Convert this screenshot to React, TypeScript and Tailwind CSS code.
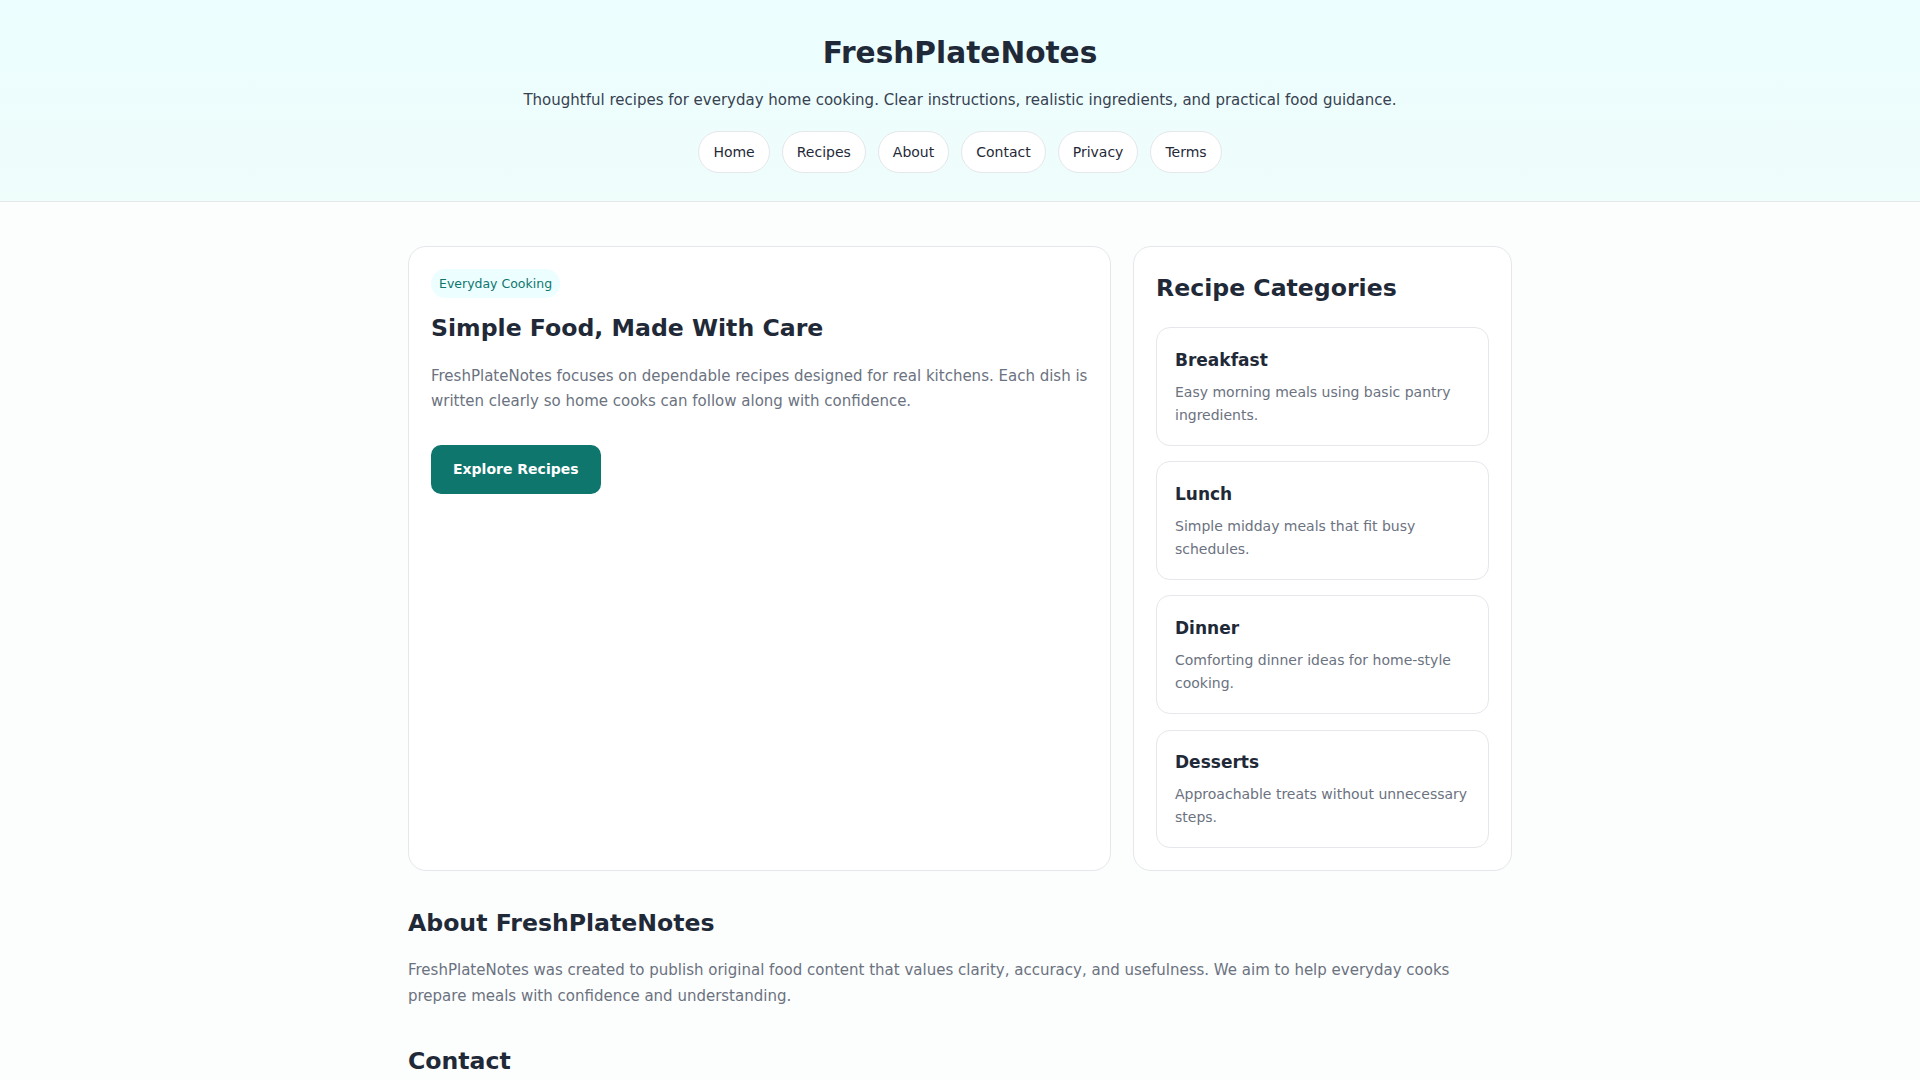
const navLinks = ["Home", "Recipes", "About", "Contact", "Privacy", "Terms"];

const categories = [
  { title: "Breakfast", text: "Easy morning meals using basic pantry ingredients." },
  { title: "Lunch", text: "Simple midday meals that fit busy schedules." },
  { title: "Dinner", text: "Comforting dinner ideas for home-style cooking." },
  { title: "Desserts", text: "Approachable treats without unnecessary steps." },
];

export default function App() {
  return (
    <div className="min-h-screen bg-[#fcfdfd] font-['DejaVu_Sans',sans-serif] text-[#1f2937]">
      {/* Header */}
      <header className="bg-gradient-to-b from-[#ecfeff] to-[#effdfb] border-b border-[#e5e7eb] pt-[35px] pb-[28px] text-center">
        <h1 className="text-[29.6px] leading-[36px] font-bold text-[#1f2937]">FreshPlateNotes</h1>
        <p className="mt-[17px] text-[15px] leading-[24px] text-[#374151]">
          Thoughtful recipes for everyday home cooking. Clear instructions, realistic ingredients, and practical food guidance.
        </p>
        <nav className="mt-[19px] flex justify-center gap-3">
          {navLinks.map((l) => (
            <a
              key={l}
              href="#"
              className="h-[42px] flex items-center px-[14px] rounded-full border border-[#e5e7eb] bg-white text-sm text-[#1f2937]"
            >
              {l}
            </a>
          ))}
        </nav>
      </header>

      <main className="w-[1104px] mx-auto pt-[44px] pb-16">
        <div className="grid grid-cols-[703px_379px] gap-[22px] items-stretch">
          {/* Hero card */}
          <section className="bg-white border border-[#e5e7eb] rounded-[18px] p-[22px]">
            <span className="inline-block rounded-full bg-[#ecfeff] text-[#0f766e] text-[12.5px] leading-[17px] px-2 py-1.5">
              Everyday Cooking
            </span>
            <h2 className="mt-[11px] text-[23.6px] leading-[38px] font-bold text-[#1f2937]">Simple Food, Made With Care</h2>
            <p className="mt-[17px] text-[15px] leading-[1.65] text-[#6b7280]">
              FreshPlateNotes focuses on dependable recipes designed for real kitchens. Each dish is written clearly so home cooks can follow along with confidence.
            </p>
            <a
              href="#"
              className="mt-[31px] inline-flex items-center h-[49px] px-[22px] rounded-[10px] bg-[#0f766e] text-white text-sm font-bold"
            >
              Explore Recipes
            </a>
          </section>

          {/* Categories */}
          <aside className="bg-white border border-[#e5e7eb] rounded-[18px] p-[22px]">
            <h2 className="text-[23.6px] leading-[38px] font-bold text-[#1f2937]">Recipe Categories</h2>
            <div className="mt-[20px] flex flex-col gap-[15.5px]">
              {categories.map((c) => (
                <div key={c.title} className="border border-[#e5e7eb] rounded-[14px] px-[18px] pt-[19.5px] pb-[18px]">
                  <h3 className="text-[17px] leading-[25px] font-bold text-[#1f2937]">{c.title}</h3>
                  <p className="mt-[8px] text-sm leading-[1.65] text-[#6b7280]">{c.text}</p>
                </div>
              ))}
            </div>
          </aside>
        </div>

        {/* About */}
        <section className="mt-[33px]">
          <h2 className="text-[23.6px] leading-[38px] font-bold text-[#1f2937]">About FreshPlateNotes</h2>
          <p className="mt-[16px] text-[15px] leading-[1.7] text-[#6b7280]">
            FreshPlateNotes was created to publish original food content that values clarity, accuracy, and usefulness. We aim to help everyday cooks prepare meals with confidence and understanding.
          </p>
        </section>

        {/* Contact */}
        <section className="mt-[33px]">
          <h2 className="text-[23.6px] leading-[38px] font-bold text-[#1f2937]">Contact</h2>
          <p className="mt-[16px] text-[15px] leading-[1.7] text-[#6b7280]">
            Questions, corrections, or recipe feedback are always welcome. Reach us through the contact page and we will reply as soon as we can.
          </p>
        </section>
      </main>
    </div>
  );
}
